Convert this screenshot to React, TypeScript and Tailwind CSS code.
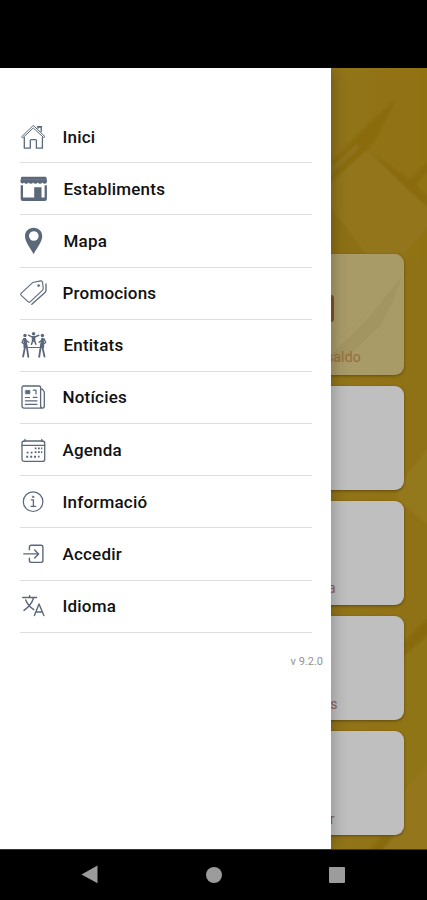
import React from 'react';

const INK = '#5b687a';

function Icon({ children, fill = false }: { children: React.ReactNode; fill?: boolean }) {
  return (
    <svg
      className="h-[28px] w-[28px] shrink-0"
      viewBox="0 0 28 28"
      fill={fill ? INK : 'none'}
      stroke={fill ? 'none' : INK}
      strokeWidth="1.3"
      strokeLinecap="round"
      strokeLinejoin="round"
    >
      {children}
    </svg>
  );
}

const Home = () => (
  <Icon>
    <path d="M4.3 14.6V25.2H10.3V17.6Q10.3 16.6 11.3 16.6H15.4Q16.4 16.6 16.4 17.6V25.2H22.4V14.6" />
    <path d="M1.8 13.6L13.3 2.4L25 13.6L23.7 14.6L13.3 5L3 14.6Z" strokeWidth="1" />
    <path d="M18 5.2V4.2H21.2V8.5" />
    <path d="M17.6 3.7H21.6" />
  </Icon>
);

const Store = () => (
  <Icon fill>
    <path d="M2 1.8H25.4Q26.4 1.8 26.6 3L27 6.4Q26.8 8.8 24.8 8.8Q23.2 8.8 22.5 7.4Q21.6 8.8 20 8.8Q18.5 8.8 17.8 7.4Q16.9 8.8 15.4 8.8Q13.9 8.8 13.2 7.4Q12.4 8.8 10.9 8.8Q9.3 8.8 8.6 7.4Q7.8 8.8 6.2 8.8Q4.7 8.8 4 7.4Q3.4 8.5 2.2 8.4Q.4 8 .4 6.2L1 3Q1.2 1.8 2 1.8Z" />
    <path d="M.7 10.2H3V22.6H14.2V12.2H21.5V22.6H24.6V10.2H26.9V23.9Q26.9 26 24.9 26H2.7Q.7 26 .7 23.9Z" />
    <path d="M1.5 4.6H26.3" stroke="#7d8896" strokeWidth=".5" />
  </Icon>
);

const Pin = () => (
  <Icon fill>
    <path
      fillRule="evenodd"
      d="M13.6 .8C8.5 .8 5 4.4 5 9C5 15.3 10.3 20.7 13.6 27.2C16.9 20.7 22.2 15.3 22.2 9C22.2 4.4 18.7 .8 13.6 .8ZM13.8 4.2A4.8 4.8 0 1 1 13.8 13.8A4.8 4.8 0 1 1 13.8 4.2Z"
    />
  </Icon>
);

const Tags = () => (
  <Icon>
    <path d="M13.8 3.2L20.5 1.9Q22.3 1.7 22.6 3.4L23.2 9.4Q23.2 10.5 22.4 11.3L10.1 22.8Q9 23.7 8 22.7L1.2 16.3Q.2 15.2 1.3 14.1L12.4 3.9Q13 3.4 13.8 3.2Z" strokeWidth="1.1" />
    <path d="M26 4.8V11.2Q26 12.7 25 13.6L11.8 25.2" strokeWidth="1.3" />
    <circle cx="18.6" cy="6.6" r="1.1" fill={INK} strokeWidth=".5" />
  </Icon>
);

const People = () => (
  <Icon>
    <g fill={INK} stroke="none">
      <circle cx="13.6" cy="2.7" r="1.7" />
      <circle cx="5" cy="4.5" r="1.7" />
      <circle cx="22.4" cy="4.5" r="1.7" />
      <path d="M11.8 5.1H15.4V10.8H11.8ZM3.5 7H6.1L8 17H3.5ZM21.3 7H23.8L24.2 17H19.5Z" />
    </g>
    <path d="M11.8 5.8L8.5 4.2M15.4 5.8L18.8 4.2M12.5 10.5L11.5 13.2M14.8 10.5L15.9 13.2" strokeWidth="1.5" />
    <path d="M5.6 9L8.7 11.3M22 9L19.1 11.3M3.6 8L2 11.5L4.2 13M24.2 8L25.6 11.5L23.7 13" strokeWidth="1.4" />
    <path d="M4.8 17L3.1 25.5M7 17L8.3 25.8M22.6 17L24.5 25.5M20.5 17L19.2 25.8" strokeWidth="1.8" />
    <path d="M8.5 16.5H19" strokeWidth="1.2" />
  </Icon>
);

const News = () => (
  <Icon>
    <path d="M20.6 4.4V23Q20.6 25.1 22.6 25.1Q24.3 25.1 24.3 23V9L22.4 6.2H20.6M22.2 25.1H4Q2 25.1 2 23V4.6Q2 3 3.6 3H19Q20.6 3 20.6 4.4" strokeWidth="1.3" />
    <rect x="5.7" y="7.4" width="4.2" height="3.4" fill={INK} strokeWidth=".7" />
    <path d="M13.3 7.2H16V11M5.4 14.5H9.5M13.3 14.4H17M5.4 17.8H17M5.4 21.3H17" strokeWidth="1.2" />
  </Icon>
);

const Calendar = () => (
  <Icon>
    <rect x="2" y="5" width="22.7" height="20.4" rx="2.2" />
    <path d="M2 9.3H24.7M5 3.4V5.4M21.8 3.4V5.4" />
    <g fill={INK} stroke="none">
      <path d="M14.7 11.4h1.8v1.8h-1.8zM18 11.4h1.8v1.8H18zM21 11.4h1.3v1.8H21zM6.7 15.7h1.8v1.8H6.7zM10.7 15.7h1.8v1.8h-1.8zM14.7 15.2h1.8V17h-1.8zM18 15.2h1.8V17H18zM21 15.2h1.3V17H21zM6.2 19.7h2v2h-2zM10.2 19.7h2v2h-2zM14 19.7h2v2h-2zM17.9 19.7h1.7v1.7h-1.7z" />
    </g>
  </Icon>
);

const Info = () => (
  <Icon>
    <circle cx="13.1" cy="13.7" r="9.8" strokeWidth="1.2" />
    <path d="M11.2 11.8H13.4V18.3M11 18.3H15.7" />
    <circle cx="13.1" cy="8.8" r=".9" fill={INK} strokeWidth=".5" />
  </Icon>
);

const Login = () => (
  <Icon>
    <path d="M9.4 9.7V7.2Q9.4 5.3 11.3 5.3H21Q22.9 5.3 22.9 7.2V20.6Q22.9 22.4 21 22.4H11.3Q9.4 22.4 9.4 20.6V18.3" strokeWidth="1.4" />
    <path d="M3.8 13.9H18.3M14.6 9.9L18.6 13.9L14.6 17.9" strokeWidth="1.4" />
  </Icon>
);

const Language = () => (
  <Icon>
    <path d="M2.7 5.5H16.6M9.6 3.6V5.5M5.8 8C7.2 12.2 10.4 15.4 13.8 17.6M13.6 5.7C12 11.3 8.7 15 4 18.4" strokeWidth="1.4" />
    <path d="M14.4 23.6L19 12L23.9 23.6M16.1 20H22.3" strokeWidth="1.4" />
  </Icon>
);

const MENU = [
  { label: 'Inici', icon: Home, inset: 'pl-[14.5px]' },
  { label: 'Establiments', icon: Store, inset: 'pl-[15.5px]' },
  { label: 'Mapa', icon: Pin, inset: 'pl-[15.5px]' },
  { label: 'Promocions', icon: Tags, inset: 'pl-[14.5px]' },
  { label: 'Entitats', icon: People, inset: 'pl-[15.5px]' },
  { label: 'Notícies', icon: News, inset: 'pl-[14.5px]' },
  { label: 'Agenda', icon: Calendar, inset: 'pl-[14.5px]' },
  { label: 'Informació', icon: Info, inset: 'pl-[14.5px]' },
  { label: 'Accedir', icon: Login, inset: 'pl-[14.5px]' },
  { label: 'Idioma', icon: Language, inset: 'pl-[14.5px]' },
];

const CARDS = [
  { label: '', inset: 'pr-[68px]' },
  { label: 'a', inset: 'pr-[68px]' },
  { label: 's', inset: 'pr-[66px]' },
  { label: 'r', inset: 'pr-[69px]' },
];

function Backdrop() {
  return (
    <svg className="absolute inset-0 h-full w-full" viewBox="0 0 427 781" preserveAspectRatio="none">
      <defs>
        <linearGradient id="gold" x1="0" y1="0" x2="1" y2="0">
          <stop offset=".77" stopColor="#91751a" />
          <stop offset="1" stopColor="#917213" />
        </linearGradient>
        <filter id="soft">
          <feGaussianBlur stdDeviation="1.5" />
        </filter>
      </defs>
      <rect width="427" height="781" fill="url(#gold)" />
      <g filter="url(#soft)">
        <path d="M325 100L366 58L397 29L378 68L368 82L325 118Z" fill="#8a6c11" />
        <path d="M325 104L356 77L360 79L325 113Z" fill="#90731a" />
        <path d="M325 122L366 83L410 116L435 144V150L404 186H366L325 140Z" fill="#93761b" />
        <path d="M368 82L410 112L435 86V96L416 116L435 138V146L408 122Z" fill="#8a6b10" />
        <path d="M325 132L366 186H325Z" fill="#8d6f14" />
        <path d="M400 206L435 180V380L400 420Z" fill="#8f7113" />
        <path d="M403 412L435 370V462L396 430Z" fill="#94781d" />
        <path d="M400 436L435 465V560L400 590Z" fill="#8f7113" />
        <path d="M400 578L435 543V560L400 594Z" fill="#886a0d" />
        <path d="M400 592L435 560V720L400 760Z" fill="#907414" />
        <path d="M403 725L435 690V785H372L388 768Z" fill="#94771a" />
        <path d="M366 785L382 768H394L380 785Z" fill="#876a0c" />
      </g>
    </svg>
  );
}

export default function App() {
  return (
    <div className="flex h-[900px] w-[427px] flex-col overflow-hidden bg-black font-[Roboto,sans-serif]">
      <div className="h-[68px] shrink-0 bg-black" />

      <main className="relative h-[781px] shrink-0 overflow-hidden">
        <Backdrop />

        <div className="relative flex flex-col gap-[11px] px-[23.5px] pt-[185.5px]">
          <section className="relative flex h-[121px] flex-col items-end overflow-hidden rounded-[9px] bg-[#a99b68] shadow-[0_1px_3px_rgba(65,45,0,0.55)]">
            <svg className="absolute inset-0 h-full w-full" viewBox="0 0 380 121" preserveAspectRatio="none">
              <path d="M300 108L345 63L378 22L368 50L356 72L318 108Z" fill="#a39562" />
            </svg>
            <div className="relative mr-[69.5px] mt-[41px] h-[27px] w-[30px] rounded-[3px] border-[3px] border-[#805226] bg-[#9b7742]" />
            <span className="relative mr-[42.5px] mt-[25.5px] text-[14px] leading-[20px] tracking-[0.2px] text-[#946d3b]">
              saldo
            </span>
          </section>
          {CARDS.map((card, i) => (
            <section
              key={i}
              className="flex h-[104.2px] items-end justify-end rounded-[9px] bg-[#bfbfbf] pb-[6.5px] shadow-[0_1px_3px_rgba(65,45,0,0.6)]"
            >
              <span className={`text-[14px] leading-[20px] text-[#8f5d55] ${card.inset}`}>{card.label}</span>
            </section>
          ))}
        </div>

        <aside className="absolute inset-y-0 left-0 w-[331px] bg-white pt-[43px] shadow-[0_0_16px_rgba(0,0,0,0.3)]">
          <nav className="ml-5 w-[292px]">
            {MENU.map(({ label, icon: Glyph, inset }) => (
              <a key={label} className="flex h-[52.18px] items-center border-b border-[#dedede]">
                <Glyph />
                <span className={`text-[17px] font-medium leading-6 tracking-[0.2px] text-[#111] ${inset}`}>{label}</span>
              </a>
            ))}
          </nav>
          <p className="mt-[21px] pr-[8px] text-right text-[11px] leading-4 text-[#929292]">v 9.2.0</p>
        </aside>
      </main>

      <footer className="flex h-[51px] shrink-0 items-center border-t border-[#353535] bg-black pb-px">
        <svg className="ml-[81px] h-[19px] w-[17px]" viewBox="0 0 17 19">
          <path d="M16.5 .6V18.2L.5 9.4Z" fill="#9c9c9c" />
        </svg>
        <div className="ml-[108px] h-4 w-4 rounded-full bg-[#9c9c9c]" />
        <div className="ml-[107px] h-4 w-4 rounded-[1px] bg-[#9c9c9c]" />
      </footer>
    </div>
  );
}
